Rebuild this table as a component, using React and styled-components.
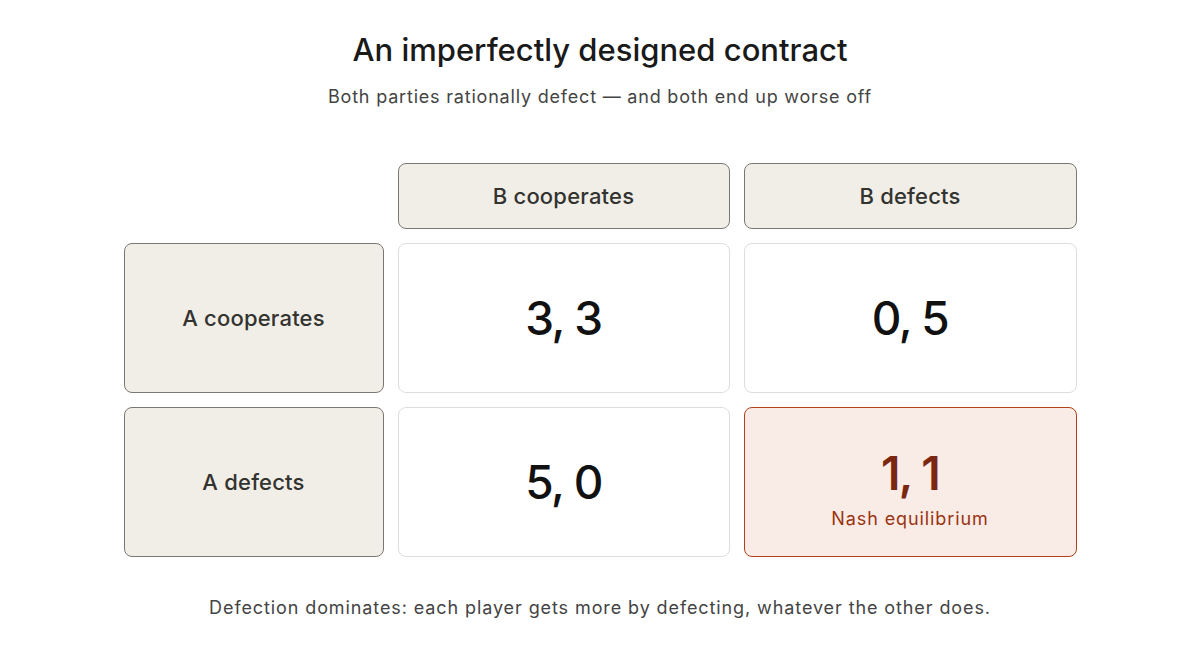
import styled, { createGlobalStyle } from "styled-components";

const GlobalStyle = createGlobalStyle`
  body {
    margin: 0;
    background: #ffffff;
    font-family: Inter, "Noto Sans", sans-serif;
    color: #1a1a1a;
  }
`;

const Page = styled.div`
  width: 1200px;
  height: 650px;
  display: flex;
  flex-direction: column;
  align-items: center;
  padding-top: 30px;
  box-sizing: border-box;
`;

const Title = styled.h1`
  margin: 0;
  font-size: 31px;
  line-height: 40px;
  font-weight: 500;
  color: #1a1a1a;
`;

const Subtitle = styled.p`
  margin: 16px 0 0;
  font-size: 18px;
  line-height: 22px;
  letter-spacing: 0.8px;
  color: #444444;
`;

const Matrix = styled.div`
  margin-top: 55px;
  display: grid;
  grid-template-columns: 260px 332px 333px;
  grid-template-rows: 66px 150px 150px;
  gap: 14px;
`;

const Cell = styled.div`
  box-sizing: border-box;
  border-radius: 8px;
  display: flex;
  flex-direction: column;
  align-items: center;
  justify-content: center;
`;

const Label = styled(Cell)`
  background: #f1eee7;
  border: 1px solid #7a7872;
  font-size: 22px;
  font-weight: 500;
  letter-spacing: 0.2px;
  color: #333330;
`;

const Payoff = styled(Cell)`
  background: ${(p) => (p.$nash ? "#f9ebe6" : "#ffffff")};
  border: 1px solid ${(p) => (p.$nash ? "#b3401a" : "#dddddd")};
  color: ${(p) => (p.$nash ? "#7a2610" : "#111111")};
  padding-top: ${(p) => (p.$nash ? "16px" : "0")};
`;

const Score = styled.div`
  font-size: 46px;
  font-weight: ${(p) => (p.$nash ? 600 : 500)};
  letter-spacing: -1.5px;
  line-height: 1;
`;

const Note = styled.div`
  margin-top: 12px;
  font-size: 18px;
  line-height: 22px;
  letter-spacing: 0.9px;
  color: #9a3412;
`;

const Footer = styled.p`
  margin: 40px 0 0;
  font-size: 18px;
  line-height: 22px;
  letter-spacing: 0.9px;
  color: #444444;
`;

const rows = [
  { label: "A cooperates", cells: ["3, 3", "0, 5"] },
  { label: "A defects", cells: ["5, 0", "1, 1"] },
];

export default function App() {
  return (
    <>
      <GlobalStyle />
      <Page>
        <Title>An imperfectly designed contract</Title>
        <Subtitle>Both parties rationally defect — and both end up worse off</Subtitle>
        <Matrix>
          <div />
          <Label>B cooperates</Label>
          <Label>B defects</Label>
          {rows.map((r, i) => [
            <Label key={r.label}>{r.label}</Label>,
            ...r.cells.map((c, j) => {
              const nash = i === 1 && j === 1;
              return (
                <Payoff key={c} $nash={nash}>
                  <Score $nash={nash}>{c}</Score>
                  {nash && <Note>Nash equilibrium</Note>}
                </Payoff>
              );
            }),
          ])}
        </Matrix>
        <Footer>
          Defection dominates: each player gets more by defecting, whatever the other does.
        </Footer>
      </Page>
    </>
  );
}
